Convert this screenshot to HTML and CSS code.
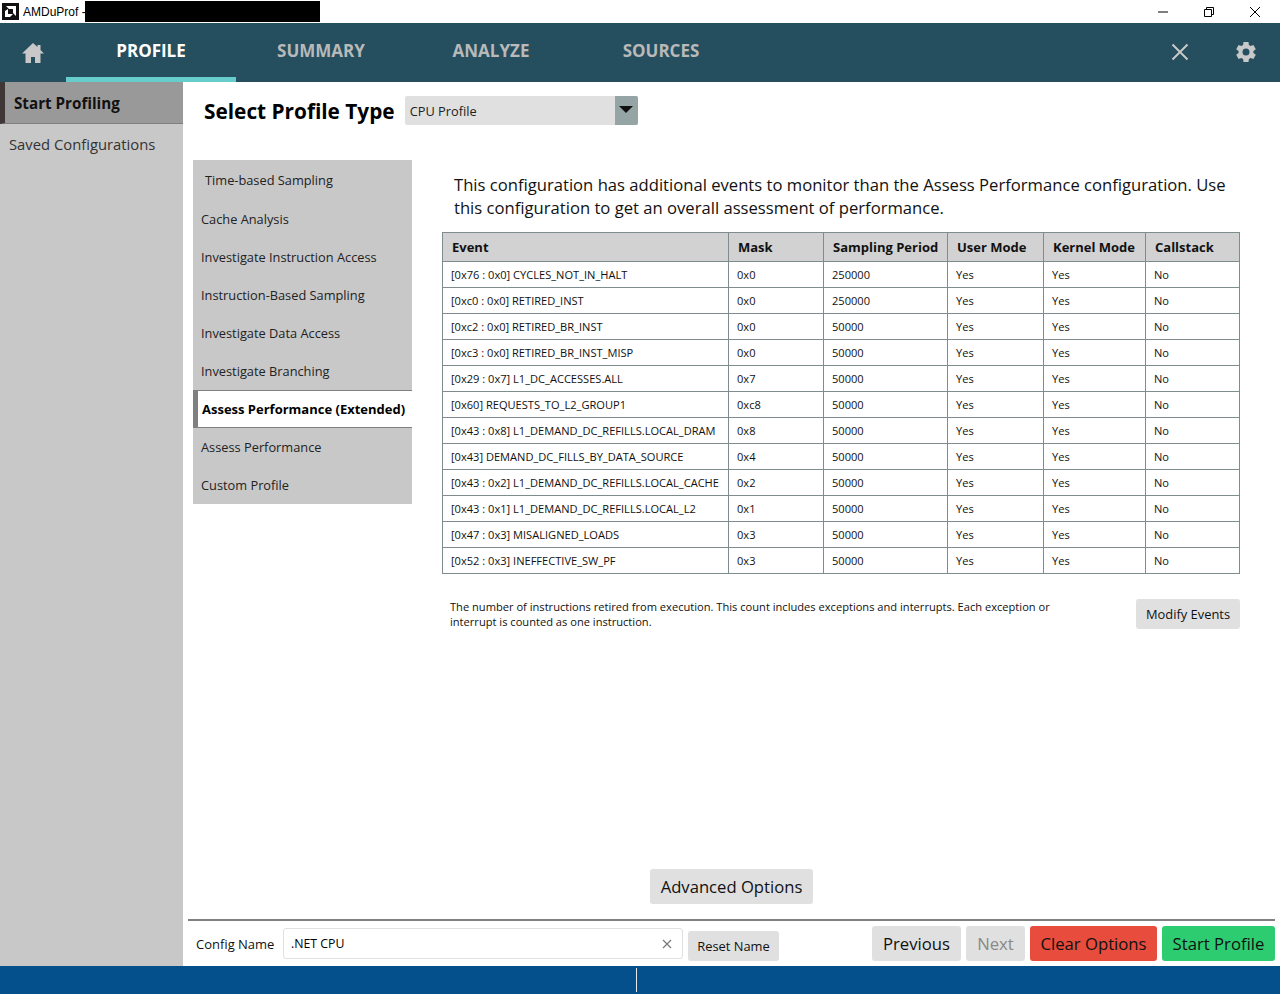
FILE: index.html
```html
<!DOCTYPE html>
<html lang="en">
<head>
<meta charset="utf-8">
<title>AMDuProf</title>
<link rel="stylesheet" href="styles.css">
</head>
<body>
<div class="app">
  <header class="titlebar">
    <svg class="applogo" width="17" height="17" viewBox="0 0 17 17"><rect width="17" height="17" fill="#111"/><path d="M4 3h10v10l-3-3V6H7z" fill="#fff"/><path d="M3 8l3-2v5h5l-3 3H3z" fill="#fff"/></svg>
    <span class="apptitle">AMDuProf -</span>
    <span class="redact"></span>
    <div class="winctl">
      <svg width="12" height="12" viewBox="0 0 12 12"><path d="M1 6h10" stroke="#000" fill="none"/></svg>
      <svg width="12" height="12" viewBox="0 0 12 12"><path d="M1.500 3.500h7v7h-7zM3.500 3.500v-2h7v7h-2" stroke="#000" fill="none"/></svg>
      <svg width="12" height="12" viewBox="0 0 12 12"><path d="M1 1l10 10M11 1L1 11" stroke="#000" fill="none"/></svg>
    </div>
  </header>
  <nav class="topnav">
    <svg class="home" width="24" height="22" viewBox="0 0 24 22"><path d="M12 1L1 11.500h3.500V21h5.500v-6h4v6h5.500v-9.500H23L19.500 8V3h-3v2z" fill="#c8c8c8"/></svg>
    <a class="tab tab-active">PROFILE</a>
    <a class="tab">SUMMARY</a>
    <a class="tab">ANALYZE</a>
    <a class="tab">SOURCES</a>
    <div class="navicons">
      <svg width="18" height="18" viewBox="0 0 18 18"><path d="M1.500 1.500l15 15M16.500 1.500l-15 15" stroke="#c8c8c8" stroke-width="2" fill="none"/></svg>
      <svg width="24" height="24" viewBox="0 0 24 24"><path fill="#c8c8c8" d="M19.400 13a7.600 7.600 0 0 0 0-2l2.400-1.800-2.400-4.200-2.800 1.100a7.500 7.500 0 0 0-1.700-1L14.500 2h-5l-.4 3.100a7.500 7.500 0 0 0-1.700 1L4.600 5 2.200 9.200 4.600 11a7.600 7.600 0 0 0 0 2l-2.400 1.800L4.600 19l2.800-1.100a7.500 7.500 0 0 0 1.700 1l.4 3.100h5l.4-3.100a7.500 7.500 0 0 0 1.700-1l2.800 1.100 2.400-4.200zM12 15.500a3.500 3.500 0 1 1 0-7 3.500 3.500 0 0 1 0 7z"/></svg>
    </div>
  </nav>
  <div class="main">
    <aside class="sidebar">
      <div class="side-active">Start Profiling</div>
      <div class="side-item">Saved Configurations</div>
    </aside>
    <section class="content">
      <div class="typerow">
        <h1 class="typetitle">Select Profile Type</h1>
        <div class="select"><span class="select-text">CPU Profile</span><span class="select-arrow"><i></i></span></div>
      </div>
      <div class="body">
        <ul class="types">
          <li class="type type-first">Time-based Sampling</li>
          <li class="type">Cache Analysis</li>
          <li class="type">Investigate Instruction Access</li>
          <li class="type">Instruction-Based Sampling</li>
          <li class="type">Investigate Data Access</li>
          <li class="type">Investigate Branching</li>
          <li class="type type-active">Assess Performance (Extended)</li>
          <li class="type">Assess Performance</li>
          <li class="type">Custom Profile</li>
        </ul>
        <div class="detail">
          <p class="desc">This configuration has additional events to monitor than the Assess Performance configuration. Use this configuration to get an overall assessment of performance.</p>
          <table class="events">
            <colgroup><col class="c1"><col class="c2"><col class="c3"><col class="c4"><col class="c5"><col class="c6"></colgroup>
            <thead><tr><th>Event</th><th>Mask</th><th>Sampling Period</th><th>User Mode</th><th>Kernel Mode</th><th>Callstack</th></tr></thead>
            <tbody>
              <tr><td>[0x76 : 0x0] CYCLES_NOT_IN_HALT</td><td>0x0</td><td>250000</td><td>Yes</td><td>Yes</td><td>No</td></tr>
              <tr><td>[0xc0 : 0x0] RETIRED_INST</td><td>0x0</td><td>250000</td><td>Yes</td><td>Yes</td><td>No</td></tr>
              <tr><td>[0xc2 : 0x0] RETIRED_BR_INST</td><td>0x0</td><td>50000</td><td>Yes</td><td>Yes</td><td>No</td></tr>
              <tr><td>[0xc3 : 0x0] RETIRED_BR_INST_MISP</td><td>0x0</td><td>50000</td><td>Yes</td><td>Yes</td><td>No</td></tr>
              <tr><td>[0x29 : 0x7] L1_DC_ACCESSES.ALL</td><td>0x7</td><td>50000</td><td>Yes</td><td>Yes</td><td>No</td></tr>
              <tr><td>[0x60] REQUESTS_TO_L2_GROUP1</td><td>0xc8</td><td>50000</td><td>Yes</td><td>Yes</td><td>No</td></tr>
              <tr><td>[0x43 : 0x8] L1_DEMAND_DC_REFILLS.LOCAL_DRAM</td><td>0x8</td><td>50000</td><td>Yes</td><td>Yes</td><td>No</td></tr>
              <tr><td>[0x43] DEMAND_DC_FILLS_BY_DATA_SOURCE</td><td>0x4</td><td>50000</td><td>Yes</td><td>Yes</td><td>No</td></tr>
              <tr><td>[0x43 : 0x2] L1_DEMAND_DC_REFILLS.LOCAL_CACHE</td><td>0x2</td><td>50000</td><td>Yes</td><td>Yes</td><td>No</td></tr>
              <tr><td>[0x43 : 0x1] L1_DEMAND_DC_REFILLS.LOCAL_L2</td><td>0x1</td><td>50000</td><td>Yes</td><td>Yes</td><td>No</td></tr>
              <tr><td>[0x47 : 0x3] MISALIGNED_LOADS</td><td>0x3</td><td>50000</td><td>Yes</td><td>Yes</td><td>No</td></tr>
              <tr><td>[0x52 : 0x3] INEFFECTIVE_SW_PF</td><td>0x3</td><td>50000</td><td>Yes</td><td>Yes</td><td>No</td></tr>
            </tbody>
          </table>
          <div class="noterow">
            <p class="note">The number of instructions retired from execution. This count includes exceptions and interrupts. Each exception or interrupt is counted as one instruction.</p>
            <button class="btn btn-modify">Modify Events</button>
          </div>
        </div>
      </div>
      <div class="advrow"><button class="btn btn-adv">Advanced Options</button></div>
      <div class="footer">
        <span class="cfg-label">Config Name</span>
        <div class="cfg-input"><span>.NET CPU</span><svg width="10" height="10" viewBox="0 0 10 10"><path d="M1 1l8 8M9 1L1 9" stroke="#777" stroke-width="1.200" fill="none"/></svg></div>
        <button class="btn btn-reset">Reset Name</button>
        <div class="actions">
          <button class="btn btn-act">Previous</button>
          <button class="btn btn-act btn-off">Next</button>
          <button class="btn btn-act btn-red">Clear Options</button>
          <button class="btn btn-act btn-green">Start Profile</button>
        </div>
      </div>
    </section>
  </div>
  <div class="statusbar"><span class="status-sep"></span></div>
</div>
</body>
</html>
```
FILE: styles.css
```css
* { box-sizing: border-box; }
html, body { margin: 0; padding: 0; }
body { font-family: "Open Sans", "Noto Sans", sans-serif; color: #000; background: #fff; }
.app { width: 1280px; height: 994px; display: flex; flex-direction: column; overflow: hidden; }

.titlebar { height: 23px; display: flex; align-items: center; padding-left: 2px; background: #fff; flex: none; }
.applogo { flex: none; margin-right: 4px; }
.apptitle { font-family: "Liberation Sans", sans-serif; font-size: 12px; white-space: nowrap; width: 62px; }
.redact { width: 235px; height: 21px; margin-top: -1px; background: #000; }
.winctl { margin-left: auto; display: flex; align-items: center; gap: 34px; padding-right: 19px; }

.topnav { height: 59px; flex: none; background: #254f5f; display: flex; align-items: stretch; position: relative; }
.home { margin: 19px 0 0 21px; }
.tab { width: 170px; padding-top: 16px; text-align: center; font-size: 17px; font-weight: 700; color: #b9b9b9; line-height: 24px; }
.tab-active { margin-left: 21px; color: #fff; border-bottom: 5px solid #66cccc; }
.navicons { margin-left: auto; display: flex; align-items: center; gap: 45px; padding: 0 22px 2px 0; }

.main { flex: 1; display: flex; min-height: 0; }
.sidebar { width: 183px; flex: none; background: #c8c8c8; }
.side-active { height: 42px; padding-left: 9px; border-left: 5px solid #3f3636; border-bottom: 1px solid #808080; background: #999; font-size: 15.200px; font-weight: 700; line-height: 43px; color: #111; }
.side-item { padding: 10px 0 0 9px; font-size: 14.800px; line-height: 20px; color: #333; }

.content { flex: 1; display: flex; flex-direction: column; min-width: 0; }
.typerow { height: 78px; flex: none; display: flex; padding: 14px 0 0 21px; }
.typetitle { margin: 0; font-size: 20.800px; font-weight: 700; line-height: 30px; white-space: nowrap; }
.select { margin-left: 10px; width: 233px; height: 29px; background: #e0e0e0; border-radius: 2px; display: flex; justify-content: space-between; font-size: 12.800px; line-height: 30px; }
.select-text { padding-left: 5px; color: #222; }
.select-arrow { width: 23px; background: #95a5a6; border-radius: 0 2px 2px 0; display: flex; justify-content: center; padding-top: 10px; }
.select-arrow i { width: 0; height: 0; border: 7px solid transparent; border-top: 7px solid #111; border-bottom: 0; }

.body { flex: 1; display: flex; min-height: 0; padding-left: 10px; }
.types { width: 219px; height: 344px; flex: none; margin: 0; padding: 0; list-style: none; background: #c8c8c8; }
.type { height: 38px; padding-left: 8px; font-size: 12.800px; line-height: 39px; color: #222; }
.type-first { height: 40px; padding-left: 12px; line-height: 41px; }
.type-active { background: #fff; border-top: 1px solid #808080; border-bottom: 1px solid #808080; border-left: 5px solid #808080; padding-left: 4px; font-size: 13px; font-weight: 700; line-height: 37px; color: #000; white-space: nowrap; }

.detail { margin-left: 30px; width: 798px; padding-top: 13px; flex: none; }
.desc { margin: 0 0 13px 12px; font-size: 16.640px; line-height: 23px; color: #111; }
.events { width: 798px; border-collapse: collapse; table-layout: fixed; font-size: 11.080px; color: #111; }
.c1 { width: 286px; } .c2 { width: 95px; } .c3 { width: 124px; } .c4 { width: 96px; } .c5 { width: 102px; }
.events th { height: 29px; padding: 0 0 0 9px; background: #d2d2d2; border: 1px solid #7f8c8d; font-size: 13px; font-weight: 700; text-align: left; white-space: nowrap; }
.events td { height: 26px; padding: 0 0 0 8px; border: 1px solid #7f8c8d; white-space: nowrap; }
.noterow { display: flex; justify-content: space-between; align-items: flex-start; margin-top: 25px; }
.note { width: 630px; margin: 0 0 0 8px; font-size: 11.120px; line-height: 15px; color: #111; }

.btn { font-family: inherit; border: 0; border-radius: 3px; background: #e0e0e0; color: #111; padding: 0; white-space: nowrap; }
.btn-modify { width: 104px; height: 30px; font-size: 12.900px; }
.advrow { flex: none; height: 50px; padding-left: 467px; }
.btn-adv { width: 163px; height: 35px; font-size: 16.650px; }

.footer { flex: none; height: 47px; margin-left: 5px; margin-right: 5px; border-top: 2px solid #808080; display: flex; align-items: flex-start; padding: 7px 0 0 8px; }
.cfg-label { font-size: 13px; line-height: 32px; width: 87px; color: #111; }
.cfg-input { width: 400px; height: 31px; border: 1px solid #e0e0e0; border-radius: 3px; display: flex; justify-content: space-between; align-items: center; padding: 0 10px 0 7px; font-size: 12.300px; }
.btn-reset { width: 91px; height: 30px; margin: 3px 0 0 5px; font-size: 12.900px; }
.actions { margin-left: auto; margin-top: -2px; display: flex; gap: 5px; }
.btn-act { height: 35px; font-size: 16.700px; }
.btn-act:nth-child(1) { width: 89px; }
.btn-act:nth-child(2) { width: 59px; }
.btn-act:nth-child(3) { width: 127px; }
.btn-act:nth-child(4) { width: 113px; }
.btn-off { color: #888; }
.btn-red { background: #e74c3c; }
.btn-green { background: #2ecc71; }

.statusbar { height: 28px; flex: none; background: #03508c; display: flex; justify-content: center; padding: 2px 7px 2px 0; }
.status-sep { width: 1px; background: #e8e8e8; }
```
